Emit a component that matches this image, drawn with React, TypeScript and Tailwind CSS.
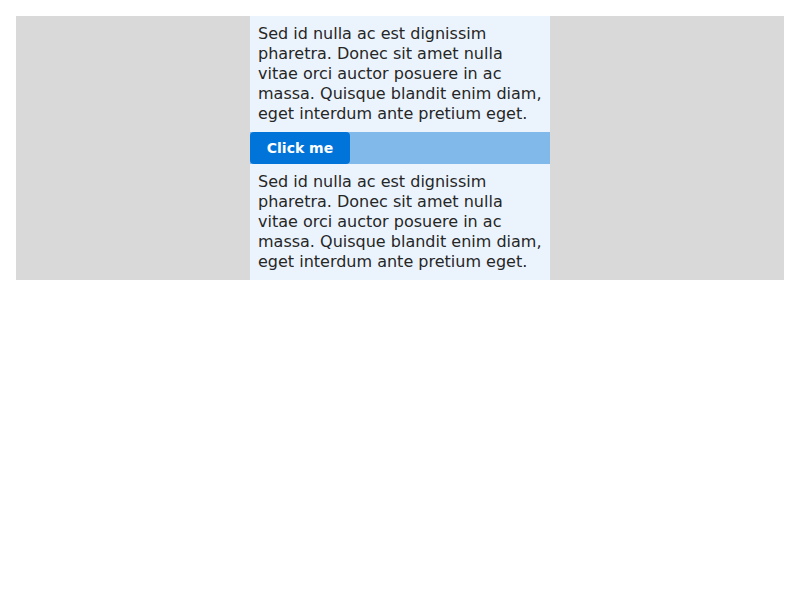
import React from "react";

const text =
  "Sed id nulla ac est dignissim pharetra. Donec sit amet nulla vitae orci auctor posuere in ac massa. Quisque blandit enim diam, eget interdum ante pretium eget.";

export default function App() {
  return (
    <div className="p-4" style={{ fontFamily: '"DejaVu Sans", sans-serif' }}>
      <div className="flex justify-center bg-[#d9d9d9]">
        <div className="w-[300px] bg-[#ebf4fd] text-[#262626] text-base leading-5">
          <p className="p-2">{text}</p>
          <div className="h-8 bg-[#80b9ea] flex">
            <button className="w-[100px] h-8 rounded bg-[#0074d9] text-white text-sm font-bold">
              Click me
            </button>
          </div>
          <p className="p-2">{text}</p>
        </div>
      </div>
    </div>
  );
}
